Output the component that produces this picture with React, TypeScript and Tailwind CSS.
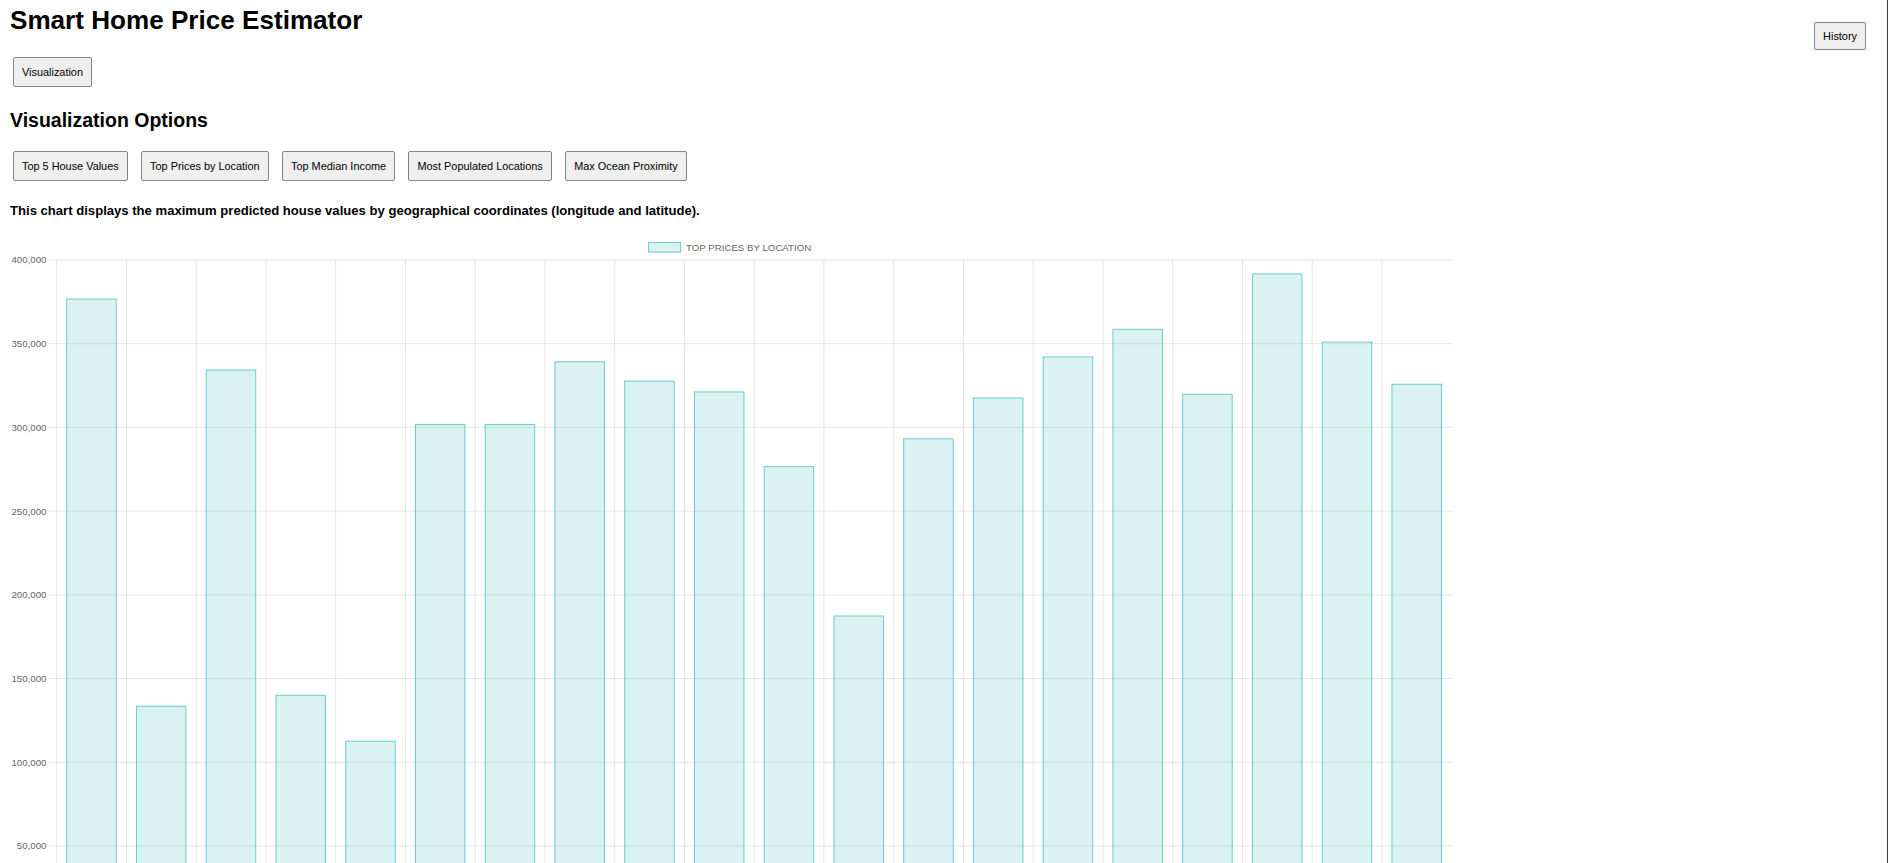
import React from 'react';

const VALUES = [
  376.7, 133.5, 334.3, 140, 112.6, 301.8, 301.8, 339.2, 327.7, 321.2, 276.6, 187.4, 293.2, 317.6, 342.1,
  358.6, 319.8, 391.7, 351, 325.8,
];

const OPTIONS = [
  'Top 5 House Values',
  'Top Prices by Location',
  'Top Median Income',
  'Most Populated Locations',
  'Max Ocean Proximity',
];

// chart geometry, in page coordinates
const LEFT = 56.7;
const RIGHT = 1451.7;
const TOP = 260;
const ZERO = 929.7;
const STEP = 69.75;
const PX_PER_K = (ZERO - TOP) / 400;

const Btn: React.FC<{ children: React.ReactNode; className?: string }> = ({ children, className = '' }) => (
  <button
    className={`h-[30px] px-2 border border-[#858585] rounded-[2px] bg-[#efefef] text-[10.9px] text-black leading-none whitespace-nowrap ${className}`}
  >
    {children}
  </button>
);

const PriceChart: React.FC = () => {
  const ticks = [400, 350, 300, 250, 200, 150, 100, 50, 0];
  return (
    <svg width="1460" height="720" className="block mt-[12px]" style={{ fontFamily: "'Liberation Sans', Arial, sans-serif" }}>
      <g transform="translate(-10,-230)">
        {/* legend */}
        <rect x="648.5" y="242.5" width="32" height="9.6" fill="rgba(75,192,192,0.2)" stroke="rgb(75,192,192)" strokeOpacity="0.8" strokeWidth="1" />
        <text x="686" y="250.6" fontSize="9.7" fill="#666">
          TOP PRICES BY LOCATION
        </text>

        {/* horizontal grid + y labels */}
        {ticks.map((t) => {
          const y = TOP + (400 - t) * PX_PER_K;
          return (
            <g key={t}>
              <line x1="48.7" x2={RIGHT} y1={y} y2={y} stroke="rgba(0,0,0,0.1)" strokeWidth="1" />
              <text x="46.5" y={y + 3.4} fontSize="9.7" fill="#666" textAnchor="end">
                {t === 0 ? '0' : `${t},000`}
              </text>
            </g>
          );
        })}

        {/* vertical grid */}
        {VALUES.map((_, i) => (
          <line
            key={i}
            x1={LEFT + i * STEP}
            x2={LEFT + i * STEP}
            y1={TOP}
            y2={ZERO + 8}
            stroke="rgba(0,0,0,0.1)"
            strokeWidth="1"
          />
        ))}

        {/* bars */}
        {VALUES.map((v, i) => {
          const x = LEFT + i * STEP + 10;
          const y = ZERO - v * PX_PER_K;
          return (
            <rect
              key={i}
              x={x}
              y={y}
              width="49.5"
              height={ZERO - y}
              fill="rgba(75,192,192,0.2)"
              stroke="rgb(75,192,192)"
              strokeOpacity="0.8"
              strokeWidth="1"
            />
          );
        })}
      </g>
    </svg>
  );
};

export default function App() {
  return (
    <div className="h-screen w-full overflow-hidden bg-white border-r border-[#3c3c3c] px-[10px] text-black font-['Liberation_Sans',Arial,sans-serif]">
      <div className="flex justify-between items-start">
        <h1 className="mt-[6px] text-[26.1px] leading-[29px] font-bold">Smart Home Price Estimator</h1>
        <Btn className="mt-[22px] !h-[28px] mr-[11px]">History</Btn>
      </div>

      <Btn className="mt-[7px] ml-[3px]">Visualization</Btn>

      <h2 className="mt-[22px] text-[19.5px] leading-[22px] font-bold">Visualization Options</h2>

      <div className="mt-[20px] ml-[3px] flex gap-[13.4px]">
        {OPTIONS.map((o) => (
          <Btn key={o}>{o}</Btn>
        ))}
      </div>

      <p className="mt-[22px] text-[13.1px] leading-[15px] font-bold">
        This chart displays the maximum predicted house values by geographical coordinates (longitude and latitude).
      </p>

      <PriceChart />
    </div>
  );
}
